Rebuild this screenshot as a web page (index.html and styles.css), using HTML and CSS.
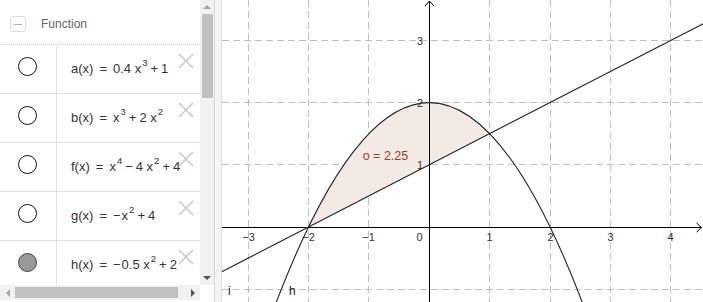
FILE: index.html
```html
<!DOCTYPE html>
<html>
<head>
<meta charset="utf-8">
<link rel="stylesheet" href="styles.css">
</head>
<body>
<div class="app">
  <div class="algebra">
    <div class="list">
      <div class="header">
        <span class="toggle"><span class="minus"></span></span>
        <span class="group">Function</span>
      </div>
      <div class="row">
        <div class="mark"><span class="dot"></span></div>
        <div class="formula">a(x)<span class="eq">=</span>0.4 x<sup>3</sup><span class="op">+</span>1</div>
        <svg class="del" viewBox="0 0 16 16"><path d="M1 1L15 15M15 1L1 15"/></svg>
      </div>
      <div class="row">
        <div class="mark"><span class="dot"></span></div>
        <div class="formula">b(x)<span class="eq">=</span>x<sup>3</sup><span class="op">+</span>2 x<sup>2</sup></div>
        <svg class="del" viewBox="0 0 16 16"><path d="M1 1L15 15M15 1L1 15"/></svg>
      </div>
      <div class="row">
        <div class="mark"><span class="dot"></span></div>
        <div class="formula">f(x)<span class="eq">=</span>x<sup>4</sup><span class="op">−</span>4 x<sup>2</sup><span class="op">+</span>4</div>
        <svg class="del" viewBox="0 0 16 16"><path d="M1 1L15 15M15 1L1 15"/></svg>
      </div>
      <div class="row">
        <div class="mark"><span class="dot"></span></div>
        <div class="formula">g(x)<span class="eq">=</span><span class="neg">−</span>x<sup>2</sup><span class="op">+</span>4</div>
        <svg class="del" viewBox="0 0 16 16"><path d="M1 1L15 15M15 1L1 15"/></svg>
      </div>
      <div class="row">
        <div class="mark"><span class="dot filled"></span></div>
        <div class="formula">h(x)<span class="eq">=</span><span class="neg">−</span>0.5 x<sup>2</sup><span class="op">+</span>2</div>
        <svg class="del" viewBox="0 0 16 16"><path d="M1 1L15 15M15 1L1 15"/></svg>
      </div>
    </div>
    <div class="vscroll">
      <div class="vbtn"><span class="tri-up"></span></div>
      <div class="vtrack"><div class="vthumb"></div></div>
      <div class="vbtn"><span class="tri-down"></span></div>
    </div>
    <div class="hscroll">
      <div class="hbtn"><span class="tri-left"></span></div>
      <div class="htrack"><div class="hthumb"></div></div>
      <div class="hbtn"><span class="tri-right"></span></div>
    </div>
    <div class="corner"></div>
  </div>
  <div class="divider"></div>
  <svg class="graph" width="481" height="302" viewBox="0 0 481 302">
    <g class="grid">
      <line x1="0" y1="40.5" x2="481" y2="40.5"/>
      <line x1="0" y1="102.5" x2="481" y2="102.5"/>
      <line x1="0" y1="164.5" x2="481" y2="164.5"/>
      <line x1="0" y1="289.5" x2="481" y2="289.5"/>
      <line x1="26.5" y1="0" x2="26.5" y2="302"/>
      <line x1="86.5" y1="0" x2="86.5" y2="302"/>
      <line x1="146.5" y1="0" x2="146.5" y2="302"/>
      <line x1="267.5" y1="0" x2="267.5" y2="302"/>
      <line x1="328.5" y1="0" x2="328.5" y2="302"/>
      <line x1="388.5" y1="0" x2="388.5" y2="302"/>
      <line x1="448.5" y1="0" x2="448.5" y2="302"/>
    </g>
    <path class="area" d="M86.5 227 Q177.1 40.4 267.7 133.7 L86.5 227 Z"/>
    <g class="axes">
      <path d="M0 227.5 H479.5"/>
      <path d="M474.5 223 L479.5 227.5 L474.5 232"/>
      <path d="M207.5 302 V1"/>
      <path d="M203 6 L207.5 1 L212 6"/>
    </g>
    <g class="ticks">
      <text x="26.5" y="241" text-anchor="middle">−3</text>
      <text x="86.5" y="241" text-anchor="middle">−2</text>
      <text x="146.5" y="241" text-anchor="middle">−1</text>
      <text x="197.5" y="241" text-anchor="middle">0</text>
      <text x="267.5" y="241" text-anchor="middle">1</text>
      <text x="328.5" y="241" text-anchor="middle">2</text>
      <text x="388.5" y="241" text-anchor="middle">3</text>
      <text x="448.5" y="241" text-anchor="middle">4</text>
      <text x="201" y="44.5" text-anchor="end">3</text>
      <text x="201" y="106.5" text-anchor="end">2</text>
      <text x="201" y="168.5" text-anchor="end">1</text>
    </g>
    <g class="curves">
      <path d="M50.26 312.8 Q207.3 -107.6 364.3 312.8"/>
      <path d="M-4.1 273.65 L485.1 21.7"/>
    </g>
    <text class="area-label" x="140.7" y="160">o = 2.25</text>
    <text class="name" x="6" y="295">i</text>
    <text class="name" x="67" y="295">h</text>
  </svg>
</div>
</body>
</html>
```

FILE: styles.css
```css
* { box-sizing: border-box; }
html, body { margin: 0; padding: 0; background: #fff; }
body { font-family: "Liberation Sans", Arial, sans-serif; }

.app {
  display: flex;
  width: 703px;
  height: 302px;
  overflow: hidden;
}

.algebra {
  width: 214px;
  height: 302px;
  display: grid;
  grid-template-columns: 200px 14px;
  grid-template-rows: 285px 15px;
  flex: none;
}

.list {
  overflow: hidden;
  background: #fff;
}

.header {
  height: 45px;
  padding-top: 4px;
  padding-left: 10px;
  display: flex;
  align-items: center;
  border-bottom: 1px dotted #d4d4d4;
}
.toggle {
  width: 16px;
  height: 16px;
  border: 1px solid #dcdcdc;
  border-radius: 3px;
  display: flex;
  align-items: center;
  justify-content: center;
}
.minus {
  width: 8px;
  height: 1px;
  background: #b0b0b0;
}
.group {
  margin-left: 15px;
  font-size: 12px;
  color: #666;
}

.row {
  position: relative;
  height: 49px;
  display: flex;
  border-bottom: 1px solid #e2e2e2;
}
.mark {
  width: 57px;
  border-right: 1px solid #e2e2e2;
  padding-top: 12px;
  padding-left: 18px;
}
.dot {
  display: block;
  width: 19px;
  height: 19px;
  border: 1px solid #111;
  border-radius: 50%;
  background: #fff;
}
.dot.filled {
  background: #999;
  border-color: #444;
}
.formula {
  padding-left: 14px;
  padding-top: 16px;
  font-size: 13px;
  line-height: 16px;
  color: #333;
  white-space: nowrap;
}
.formula sup {
  font-size: 9.5px;
  line-height: 0;
  vertical-align: 7px;
  margin-left: 1px;
}
.eq { margin: 0 6px; }
.op { margin: 0 3px; }
.neg { margin-right: 1px; }

.del {
  position: absolute;
  left: 178px;
  top: 8px;
  width: 16px;
  height: 16px;
  fill: none;
  stroke: #cacaca;
  stroke-width: 1.6;
}

.vscroll {
  background: #f1f1f1;
  display: flex;
  flex-direction: column;
}
.vbtn {
  height: 14px;
  display: flex;
  align-items: center;
  justify-content: center;
  flex: none;
}
.vtrack { flex: 1; }
.vthumb {
  height: 84px;
  margin: 0 1px 0 2px;
  background: #c1c1c1;
}
.tri-up {
  width: 0; height: 0;
  border-left: 4px solid transparent;
  border-right: 4px solid transparent;
  border-bottom: 4px solid #a3a3a3;
}
.tri-down {
  width: 0; height: 0;
  border-left: 4px solid transparent;
  border-right: 4px solid transparent;
  border-top: 4px solid #505050;
}

.hscroll {
  background: #f1f1f1;
  display: flex;
}
.hbtn {
  width: 15px;
  display: flex;
  align-items: center;
  justify-content: center;
  flex: none;
}
.htrack {
  flex: 1;
  padding: 2px 0 2px 0;
}
.hthumb {
  width: 163px;
  height: 100%;
  background: #c1c1c1;
}
.tri-left {
  width: 0; height: 0;
  border-top: 4px solid transparent;
  border-bottom: 4px solid transparent;
  border-right: 4px solid #a3a3a3;
}
.tri-right {
  width: 0; height: 0;
  border-top: 4px solid transparent;
  border-bottom: 4px solid transparent;
  border-left: 4px solid #505050;
}
.corner { background: #fff; }

.divider {
  width: 8px;
  flex: none;
  background: #f5f5f5;
  border-left: 1px solid #d6d6d6;
  border-right: 1px solid #dcdcdc;
}

.graph {
  display: block;
  flex: none;
  background: #fff;
}
.grid line {
  stroke: #c0c0c0;
  stroke-width: 1;
  stroke-dasharray: 7 4;
}
.area {
  fill: #f4eae5;
  stroke: none;
}
.axes path {
  fill: none;
  stroke: #000;
  stroke-width: 1;
}
.ticks text {
  font-family: "Liberation Sans", Arial, sans-serif;
  font-size: 11px;
  fill: #333;
}
.curves path {
  fill: none;
  stroke: #222;
  stroke-width: 1.1;
}
.area-label {
  font-family: "Liberation Sans", Arial, sans-serif;
  font-size: 12.5px;
  fill: #a0401a;
}
.name {
  font-family: "Liberation Sans", Arial, sans-serif;
  font-size: 12px;
  fill: #222;
}
```
